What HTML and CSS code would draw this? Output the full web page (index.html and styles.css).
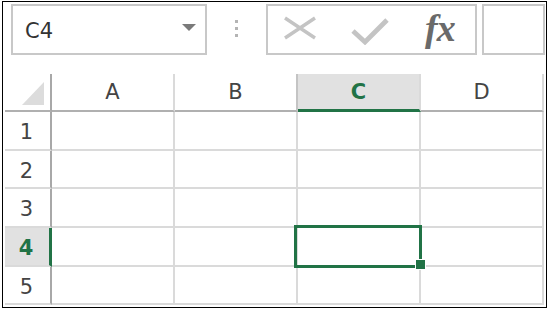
FILE: index.html
```html
<!DOCTYPE html>
<html lang="en">
<head>
    <meta charset="UTF-8">
    <title>Name Box and Grid</title>
    <link rel="stylesheet" href="styles.css">
</head>
<body>

    <div class="frame">
        <div class="toolbar">
            <div class="namebox">
                <span class="name">C4</span>
                <svg class="caret" width="14" height="7" viewBox="0 0 14 7">
                    <polygon points="0,0 14,0 7,7" fill="#7a7a7a"/>
                </svg>
            </div>
            <div class="dots">
                <span></span><span></span><span></span>
            </div>
            <div class="fxbar">
                <svg class="icon-cancel" width="34" height="24" viewBox="0 0 34 24">
                    <path d="M2 2 L32 22 M32 2 L2 22" stroke="#c4c4c4" stroke-width="3.4" fill="none"/>
                </svg>
                <svg class="icon-enter" width="38" height="27" viewBox="0 0 38 27">
                    <path d="M2 13 L14 24 L36 2" stroke="#c4c4c4" stroke-width="4.8" fill="none"/>
                </svg>
                <span class="fx">fx</span>
            </div>
            <div class="formula"></div>
        </div>

        <div class="sheet">
            <div class="cell corner">
                <svg width="22" height="23" viewBox="0 0 22 23">
                    <polygon points="22,0 22,23 0,23" fill="#dcdcdc"/>
                </svg>
            </div>
            <div class="cell colhead">A</div>
            <div class="cell colhead before-active">B</div>
            <div class="cell colhead active">C</div>
            <div class="cell colhead">D</div>

            <div class="cell rowhead">1</div>
            <div class="cell"></div><div class="cell"></div><div class="cell"></div><div class="cell"></div>

            <div class="cell rowhead">2</div>
            <div class="cell"></div><div class="cell"></div><div class="cell"></div><div class="cell"></div>

            <div class="cell rowhead">3</div>
            <div class="cell"></div><div class="cell"></div><div class="cell"></div><div class="cell"></div>

            <div class="cell rowhead active">4</div>
            <div class="cell"></div><div class="cell"></div><div class="cell"></div><div class="cell"></div>

            <div class="cell rowhead">5</div>
            <div class="cell"></div><div class="cell"></div><div class="cell"></div><div class="cell"></div>

            <div class="selection"></div>
            <div class="handle"></div>
        </div>
    </div>

</body>
</html>
```

FILE: styles.css
```css
body {
    margin: 0;
    font-family: "DejaVu Sans", sans-serif;
    background: #fff;
}
.frame {
    box-sizing: border-box;
    width: 545px;
    height: 307px;
    margin: 1px 0 0 2px;
    border: 1px solid #000;
}
.toolbar {
    box-sizing: border-box;
    display: flex;
    align-items: flex-start;
    height: 72px;
    padding: 2px 0 0 8px;
}
.namebox {
    box-sizing: border-box;
    display: flex;
    align-items: center;
    justify-content: space-between;
    width: 196px;
    height: 51px;
    padding: 2px 9px 0 12px;
    border: 2px solid #c8c8c8;
}
.name {
    font-size: 21px;
    color: #333;
}
.caret {
    margin-top: -6px;
}
.dots {
    display: flex;
    flex-direction: column;
    align-items: center;
    gap: 4px;
    width: 59px;
    padding-top: 16px;
}
.dots span {
    width: 3px;
    height: 3px;
    background: #b4b4b4;
}
.fxbar {
    box-sizing: border-box;
    display: flex;
    align-items: flex-start;
    width: 211px;
    height: 51px;
    border: 2px solid #c8c8c8;
}
.icon-cancel {
    margin: 10px 0 0 15px;
}
.icon-enter {
    margin: 12px 0 0 34px;
}
.fx {
    margin: 0 0 0 36px;
    font-family: "Liberation Serif", serif;
    font-style: italic;
    font-weight: bold;
    font-size: 38px;
    line-height: 44px;
    letter-spacing: -1px;
    color: #6a6a6a;
}
.formula {
    box-sizing: border-box;
    width: 63px;
    height: 51px;
    margin-left: 5px;
    border: 2px solid #c8c8c8;
}
.sheet {
    position: relative;
    display: grid;
    grid-template-columns: 47px repeat(4, 123px);
    grid-template-rows: 38px 39px 38px 39px 39px 38px;
    margin-left: 2px;
}
.cell {
    box-sizing: border-box;
    display: flex;
    align-items: center;
    justify-content: center;
    border-right: 2px solid #dadada;
    border-bottom: 2px solid #dadada;
    font-size: 21px;
    color: #444;
}
.corner {
    align-items: flex-end;
    justify-content: flex-end;
    padding: 0 6px 5px 0;
    border-right-color: #a8a8a8;
    border-bottom-color: #b0b0b0;
}
.colhead {
    border-bottom-color: #b0b0b0;
}
.colhead.before-active {
    border-right-color: #c4c4c4;
}
.colhead.active {
    background: #e1e1e1;
    border-bottom: 3px solid #217346;
    color: #217346;
    font-weight: bold;
}
.rowhead {
    padding: 3px 2px 0 0;
    border-right-color: #a8a8a8;
}
.rowhead.active {
    background: #e1e1e1;
    border-right: 3px solid #217346;
    color: #217346;
    font-weight: bold;
}
.selection {
    position: absolute;
    left: 289px;
    top: 151px;
    width: 128px;
    height: 43px;
    box-sizing: border-box;
    border: 3px solid #217346;
}
.handle {
    position: absolute;
    left: 410px;
    top: 185px;
    width: 9px;
    height: 9px;
    background: #217346;
    border: 1px solid #fff;
}
```
